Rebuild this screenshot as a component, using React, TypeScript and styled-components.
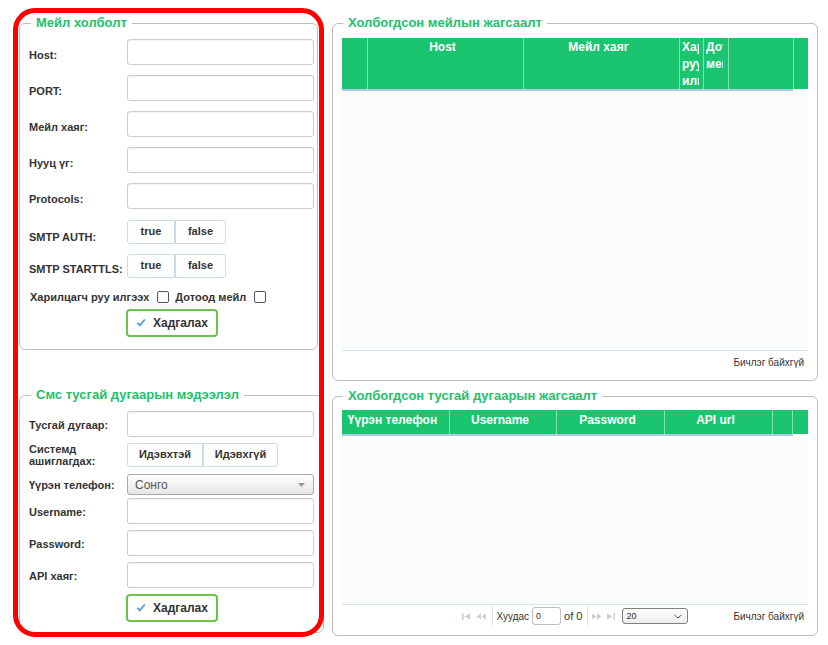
import React from "react";
import styled, { createGlobalStyle } from "styled-components";

const FONT = `"Liberation Sans", Arial, sans-serif`;

const GlobalStyle = createGlobalStyle`
  html, body { margin: 0; padding: 0; background: #fff; }
  body { font-family: ${FONT}; color: #333; }
`;

const Page = styled.div`
  position: relative;
  width: 828px;
  height: 645px;
  box-sizing: border-box;
  padding: 15px 0 0 19px;
  display: grid;
  grid-template-columns: 305px 486px;
  column-gap: 8px;
  align-items: start;
`;

const Column = styled.div`
  display: flex;
  flex-direction: column;
  align-items: flex-start;
`;

const Box = styled.fieldset<{ $w: number; $pt: number; $pb: number; $mt?: number }>`
  margin: ${(p) => p.$mt ?? 0}px 0 0;
  min-width: 0;
  box-sizing: border-box;
  width: ${(p) => p.$w}px;
  border: 1px solid #bdbdbd;
  border-radius: 6px;
  padding: ${(p) => p.$pt}px 9px ${(p) => p.$pb}px;
`;

const Legend = styled.legend<{ $ml: number }>`
  margin-left: ${(p) => p.$ml}px;
  padding: 0 5px;
  font: bold 13px/16px ${FONT};
  color: #22c16b;
`;

const Row = styled.div<{ $mb: number }>`
  display: grid;
  grid-template-columns: 98px 187px;
  align-items: center;
  margin-bottom: ${(p) => p.$mb}px;
`;

const Label = styled.label<{ $shift?: number }>`
  font: bold 11px/12px ${FONT};
  color: #333;
  padding-top: ${(p) => p.$shift ?? 0}px;
`;

const TextInput = styled.input`
  box-sizing: border-box;
  width: 187px;
  height: 26px;
  margin: 0;
  padding: 0 6px;
  border: 1px solid #cccccc;
  border-radius: 3px;
  background: #fff;
  box-shadow: inset 0 1px 1px rgba(0, 0, 0, 0.05);
  font: 12px ${FONT};
`;

const Toggle = styled.div`
  display: flex;
`;

const ToggleBtn = styled.button<{ $w: number }>`
  box-sizing: border-box;
  width: ${(p) => p.$w}px;
  height: 24px;
  margin: 0;
  padding: 0 0 2px;
  border: 1px solid #c9dcee;
  background: #fff;
  color: #333;
  font: bold 11px ${FONT};
  &:first-child {
    border-radius: 3px 0 0 3px;
  }
  &:last-child {
    border-radius: 0 3px 3px 0;
  }
`;

const CheckRow = styled.div`
  display: flex;
  align-items: center;
  height: 16px;
  margin: 0 0 4px 1px;
  font: bold 11px ${FONT};
  color: #333;
`;

const Check = styled.input.attrs({ type: "checkbox" })<{ $ml: number; $mr: number }>`
  appearance: none;
  box-sizing: border-box;
  width: 12px;
  height: 12px;
  margin: 0 ${(p) => p.$mr}px 0 ${(p) => p.$ml}px;
  border: 1px solid #555;
  border-radius: 2px;
  background: #fff;
`;

const ButtonRow = styled.div`
  padding-left: 97px;
`;

const SaveBtn = styled.button`
  box-sizing: border-box;
  width: 92px;
  height: 28px;
  margin: 0;
  padding: 0 0 1px;
  border: 2px solid #6cc24e;
  border-radius: 4px;
  background: #fff;
  display: flex;
  align-items: center;
  justify-content: center;
  gap: 7px;
  font: bold 12px ${FONT};
  color: #333;
`;

const Select = styled.div`
  box-sizing: border-box;
  width: 187px;
  height: 21px;
  border: 1px solid #a9a9a9;
  border-radius: 3px;
  background: linear-gradient(#ffffff, #e6e6e6);
  display: flex;
  align-items: center;
  justify-content: space-between;
  padding: 0 8px 0 7px;
  font: 12px ${FONT};
  color: #555;
`;

/* ---------- right side grids ---------- */

const GridWrap = styled.div`
  width: 466px;
`;

const HeadRow = styled.div<{ $h: number }>`
  display: flex;
  height: ${(p) => p.$h}px;
  background: #1bc46e;
`;

const HeadCell = styled.div<{ $w: number; $pt: number; $pr: number; $noBorder?: boolean }>`
  box-sizing: border-box;
  flex: none;
  width: ${(p) => p.$w}px;
  border-right: ${(p) => (p.$noBorder ? "none" : "1px solid #86dfb5")};
  padding: ${(p) => p.$pt}px ${(p) => p.$pr}px 0 2px;
`;

const HeadText = styled.div`
  overflow: hidden;
  color: #fff;
  font: bold 12px/17px ${FONT};
  text-align: center;
`;

const HeadLine = styled.div<{ $w: number }>`
  width: ${(p) => p.$w}px;
  height: 2px;
  background: #aec9e8;
`;

const GridBody = styled.div<{ $h: number }>`
  height: ${(p) => p.$h}px;
  background: #fafcfd;
  border-bottom: 1px solid #d3e3f0;
`;

const Footer = styled.div`
  height: 22px;
  display: grid;
  grid-template-columns: 1fr auto 1fr;
  align-items: center;
  font: 10px ${FONT};
  color: #333;
`;

const Records = styled.span`
  grid-column: 3;
  justify-self: end;
  padding-right: 4px;
`;

const Pager = styled.div`
  grid-column: 2;
  display: flex;
  align-items: center;
  font: 10px ${FONT};
  color: #333;
`;

const OfText = styled.span`
  font-size: 11px;
`;

const PagerSep = styled.span<{ $ml: number; $mr: number }>`
  width: 1px;
  height: 20px;
  background: #dfe5ea;
  margin: 0 ${(p) => p.$mr}px 0 ${(p) => p.$ml}px;
`;

const PageInput = styled.input`
  box-sizing: border-box;
  width: 29px;
  height: 18px;
  margin: 0 3px;
  padding: 0 3px;
  border: 1px solid #bfbfbf;
  border-radius: 3px;
  font: 9px ${FONT};
  color: #333;
`;

const SizeSelect = styled.div`
  box-sizing: border-box;
  width: 66px;
  height: 16px;
  margin-left: 7px;
  border: 1px solid #808080;
  border-radius: 3px;
  background: linear-gradient(#ffffff, #ececec);
  display: flex;
  align-items: center;
  justify-content: space-between;
  padding: 0 5px 0 3px;
  font: 9px ${FONT};
  color: #333;
`;

const Highlight = styled.div`
  position: absolute;
  left: 13px;
  top: 8px;
  width: 311px;
  height: 629px;
  box-sizing: border-box;
  border: 5px solid #ff0000;
  border-radius: 22px;
  pointer-events: none;
`;

const NavIcon = ({ kind, ml }: { kind: "first" | "prev" | "next" | "last"; ml: number }) => {
  const c = "#c6ced8";
  const w = kind === "first" || kind === "last" ? 8 : 10;
  let d = "";
  if (kind === "first") d = "M0 0h1.5v7H0z M8 0.5L2.5 3.5L8 6.5z";
  if (kind === "prev") d = "M5 0.5L0.5 3.5L5 6.5z M10 0.5L5.5 3.5L10 6.5z";
  if (kind === "next") d = "M0 0.5L4.5 3.5L0 6.5z M5 0.5L9.5 3.5L5 6.5z";
  if (kind === "last") d = "M0 0.5L5.5 3.5L0 6.5z M6.5 0h1.5v7H6.5z";
  return (
    <svg width={w} height={7} viewBox={`0 0 ${w} 7`} style={{ marginLeft: ml }}>
      <path d={d} fill={c} />
    </svg>
  );
};

const CheckIcon = () => (
  <svg width="10" height="9" viewBox="0 0 10 9">
    <polyline points="1.2,4.8 3.8,7.4 8.8,1.5" fill="none" stroke="#5b9bd5" strokeWidth="1.8" />
  </svg>
);

const Caret = () => (
  <svg width="7" height="4" viewBox="0 0 7 4">
    <path d="M0 0h7L3.5 4z" fill="#999" />
  </svg>
);

const Chevron = () => (
  <svg width="8" height="5" viewBox="0 0 8 5">
    <polyline points="0.5,0.8 4,4 7.5,0.8" fill="none" stroke="#555" strokeWidth="1" />
  </svg>
);

const mailCols = [
  { w: 26, t: "", pr: 8 },
  { w: 156, t: "Host", pr: 8 },
  { w: 156, t: "Мейл хаяг", pr: 8 },
  { w: 24, t: "Харилцагч руу илгээх", pr: 4 },
  { w: 25, t: "Дотоод мейл", pr: 5 },
  { w: 65, t: "", pr: 8 },
];

const smsCols = [
  { w: 108, t: "Үүрэн телефон" },
  { w: 107, t: "Username" },
  { w: 108, t: "Password" },
  { w: 108, t: "API url" },
  { w: 20, t: "" },
];

export default function App() {
  return (
    <>
      <GlobalStyle />
      <Page>
        <Column>
          <Box $w={299} $pt={8} $pb={12}>
            <Legend $ml={2}>Мейл холболт</Legend>
            <Row $mb={10}>
              <Label $shift={6}>Host:</Label>
              <TextInput />
            </Row>
            <Row $mb={10}>
              <Label $shift={6}>PORT:</Label>
              <TextInput />
            </Row>
            <Row $mb={10}>
              <Label $shift={6}>Мейл хаяг:</Label>
              <TextInput />
            </Row>
            <Row $mb={10}>
              <Label $shift={6}>Нууц үг:</Label>
              <TextInput />
            </Row>
            <Row $mb={11}>
              <Label $shift={6}>Protocols:</Label>
              <TextInput />
            </Row>
            <Row $mb={10}>
              <Label $shift={10}>SMTP AUTH:</Label>
              <Toggle>
                <ToggleBtn $w={48}>true</ToggleBtn>
                <ToggleBtn $w={51}>false</ToggleBtn>
              </Toggle>
            </Row>
            <Row $mb={11}>
              <Label $shift={6}>SMTP STARTTLS:</Label>
              <Toggle>
                <ToggleBtn $w={48}>true</ToggleBtn>
                <ToggleBtn $w={51}>false</ToggleBtn>
              </Toggle>
            </Row>
            <CheckRow>
              Харилцагч руу илгээх
              <Check $ml={8} $mr={6} />
              Дотоод мейл
              <Check $ml={8} $mr={0} />
            </CheckRow>
            <ButtonRow>
              <SaveBtn>
                <CheckIcon />
                Хадгалах
              </SaveBtn>
            </ButtonRow>
          </Box>

          <Box $w={305} $pt={8} $pb={10} $mt={37}>
            <Legend $ml={2}>Смс тусгай дугаарын мэдээлэл</Legend>
            <Row $mb={6}>
              <Label $shift={2}>Тусгай дугаар:</Label>
              <TextInput />
            </Row>
            <Row $mb={7}>
              <Label>Системд ашиглагдах:</Label>
              <Toggle>
                <ToggleBtn $w={76}>Идэвхтэй</ToggleBtn>
                <ToggleBtn $w={75}>Идэвхгүй</ToggleBtn>
              </Toggle>
            </Row>
            <Row $mb={3}>
              <Label>Үүрэн телефон:</Label>
              <Select>
                <span>Сонго</span>
                <Caret />
              </Select>
            </Row>
            <Row $mb={6}>
              <Label $shift={2}>Username:</Label>
              <TextInput />
            </Row>
            <Row $mb={6}>
              <Label $shift={2}>Password:</Label>
              <TextInput />
            </Row>
            <Row $mb={6}>
              <Label $shift={2}>API хаяг:</Label>
              <TextInput />
            </Row>
            <ButtonRow>
              <SaveBtn>
                <CheckIcon />
                Хадгалах
              </SaveBtn>
            </ButtonRow>
          </Box>
        </Column>

        <Column>
          <Box $w={486} $pt={7} $pb={7}>
            <Legend $ml={1}>Холбогдсон мейлын жагсаалт</Legend>
            <GridWrap>
              <HeadRow $h={51}>
                {mailCols.map((c, i) => (
                  <HeadCell key={i} $w={c.w} $pt={1} $pr={c.pr}>
                    <HeadText>{c.t}</HeadText>
                  </HeadCell>
                ))}
                <HeadCell $w={14} $pt={1} $pr={0} $noBorder />
              </HeadRow>
              <HeadLine $w={451} />
              <GridBody $h={259} />
              <Footer>
                <Records>Бичлэг байхгүй</Records>
              </Footer>
            </GridWrap>
          </Box>

          <Box $w={486} $pt={6} $pb={8} $mt={7}>
            <Legend $ml={1}>Холбогдсон тусгай дугаарын жагсаалт</Legend>
            <GridWrap>
              <HeadRow $h={24}>
                {smsCols.map((c, i) => (
                  <HeadCell key={i} $w={c.w} $pt={2} $pr={8}>
                    <HeadText>{c.t}</HeadText>
                  </HeadCell>
                ))}
                <HeadCell $w={15} $pt={2} $pr={0} $noBorder />
              </HeadRow>
              <HeadLine $w={451} />
              <GridBody $h={168} />
              <Footer>
                <Pager>
                  <NavIcon kind="first" ml={0} />
                  <NavIcon kind="prev" ml={6} />
                  <PagerSep $ml={6} $mr={4} />
                  <span>Хуудас</span>
                  <PageInput defaultValue="0" />
                  <OfText>of 0</OfText>
                  <PagerSep $ml={5} $mr={4} />
                  <NavIcon kind="next" ml={0} />
                  <NavIcon kind="last" ml={5} />
                  <SizeSelect>
                    <span>20</span>
                    <Chevron />
                  </SizeSelect>
                </Pager>
                <Records>Бичлэг байхгүй</Records>
              </Footer>
            </GridWrap>
          </Box>
        </Column>
        <Highlight />
      </Page>
    </>
  );
}
